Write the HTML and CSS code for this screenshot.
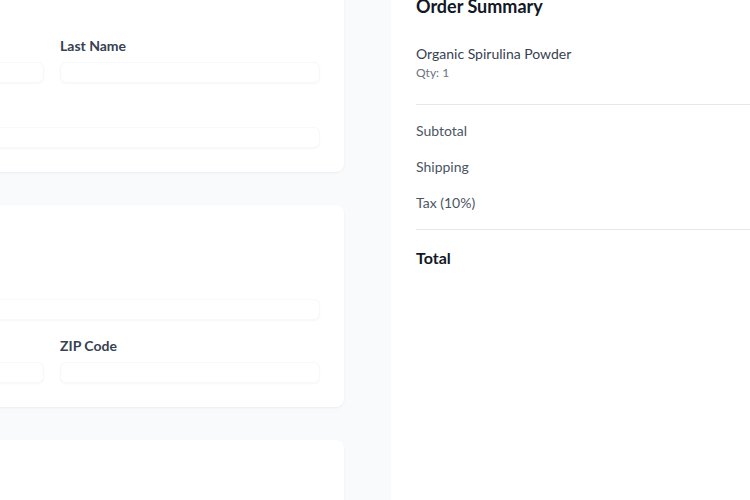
FILE: index.html
```html
<!DOCTYPE html>
<html lang="en">
<head>
<meta charset="utf-8">
<title>Checkout</title>
<link rel="stylesheet" href="styles.css">
</head>
<body>
<div class="page">
  <div class="forms">
    <section class="card">
      <h2 class="card-title">Contact Information</h2>
      <div class="grid">
        <div class="field">
          <label class="label">First Name</label>
          <div class="input"></div>
        </div>
        <div class="field">
          <label class="label">Last Name</label>
          <div class="input"></div>
        </div>
        <div class="field full">
          <label class="label">Email</label>
          <div class="input"></div>
        </div>
      </div>
    </section>
    <section class="card">
      <h2 class="card-title">Shipping Address</h2>
      <div class="grid tight">
        <div class="field full">
          <label class="label">Address</label>
          <div class="input"></div>
        </div>
        <div class="field">
          <label class="label">City</label>
          <div class="input"></div>
        </div>
        <div class="field">
          <label class="label">ZIP Code</label>
          <div class="input"></div>
        </div>
      </div>
    </section>
    <section class="card">
      <h2 class="card-title">Payment</h2>
      <div class="grid">
        <div class="field full">
          <label class="label">Card Number</label>
          <div class="input"></div>
        </div>
      </div>
    </section>
  </div>
  <aside class="summary">
    <h2 class="summary-title">Order Summary</h2>
    <div class="item">
      <div class="item-name">Organic Spirulina Powder</div>
      <div class="item-qty">Qty: 1</div>
    </div>
    <div class="totals">
      <div class="row">Subtotal</div>
      <div class="row">Shipping</div>
      <div class="row">Tax (10%)</div>
    </div>
    <div class="total">Total</div>
  </aside>
</div>
</body>
</html>
```
FILE: styles.css
```css
* { box-sizing: border-box; }
html, body { margin: 0; padding: 0; }
body {
  background: #f9fafb;
  font-family: Lato, "Liberation Sans", sans-serif;
  color: #111827;
  overflow: hidden;
  height: 500px;
}
.page {
  display: flex;
  align-items: flex-start;
  margin-top: -32px;
  margin-left: -240px;
  gap: 47px;
}
.forms {
  width: 584px;
  flex: none;
  display: flex;
  flex-direction: column;
  gap: 33px;
}
.card {
  background: #fff;
  border-radius: 8px;
  box-shadow: 0 1px 3px rgba(0,0,0,0.04), 0 1px 2px rgba(0,0,0,0.02);
  padding: 24px;
}
.card-title {
  margin: 0 0 18px;
  font-size: 18px;
  line-height: 28px;
  font-weight: 700;
}
.grid {
  display: grid;
  grid-template-columns: 1fr 1fr;
  column-gap: 16px;
  row-gap: 20px;
}
.grid.tight { row-gap: 18px; }
.full { grid-column: 1 / -1; }
.field { display: flex; flex-direction: column; }
.label {
  font-size: 14px;
  line-height: 16px;
  font-weight: 700;
  color: #374151;
  margin-bottom: 8px;
}
.input {
  height: 21px;
  border: 1px solid #f7f8f9;
  border-radius: 6px;
  box-shadow: 0 1px 2px rgba(0,0,0,0.035);
  background: #fff;
}
.summary {
  flex: none;
  width: 420px;
  height: 600px;
  background: #fff;
  padding: 24px 24px 24px 25px;
}
.summary-title {
  margin: 0 0 24px;
  font-size: 18px;
  line-height: 28px;
  font-weight: 700;
  color: #111827;
}
.item {
  padding-bottom: 23px;
  border-bottom: 1px solid #e5e7eb;
}
.item-name {
  font-size: 14px;
  line-height: 20px;
  color: #374151;
}
.item-qty {
  margin-top: 1px;
  font-size: 12px;
  line-height: 16px;
  color: #6b7280;
}
.totals {
  display: flex;
  flex-direction: column;
  gap: 16px;
  padding: 16px 0;
  border-bottom: 1px solid #e5e7eb;
}
.row {
  font-size: 14px;
  line-height: 20px;
  color: #4b5563;
}
.total {
  padding-top: 16px;
  font-size: 16px;
  line-height: 24px;
  font-weight: 700;
  color: #111827;
}
```
